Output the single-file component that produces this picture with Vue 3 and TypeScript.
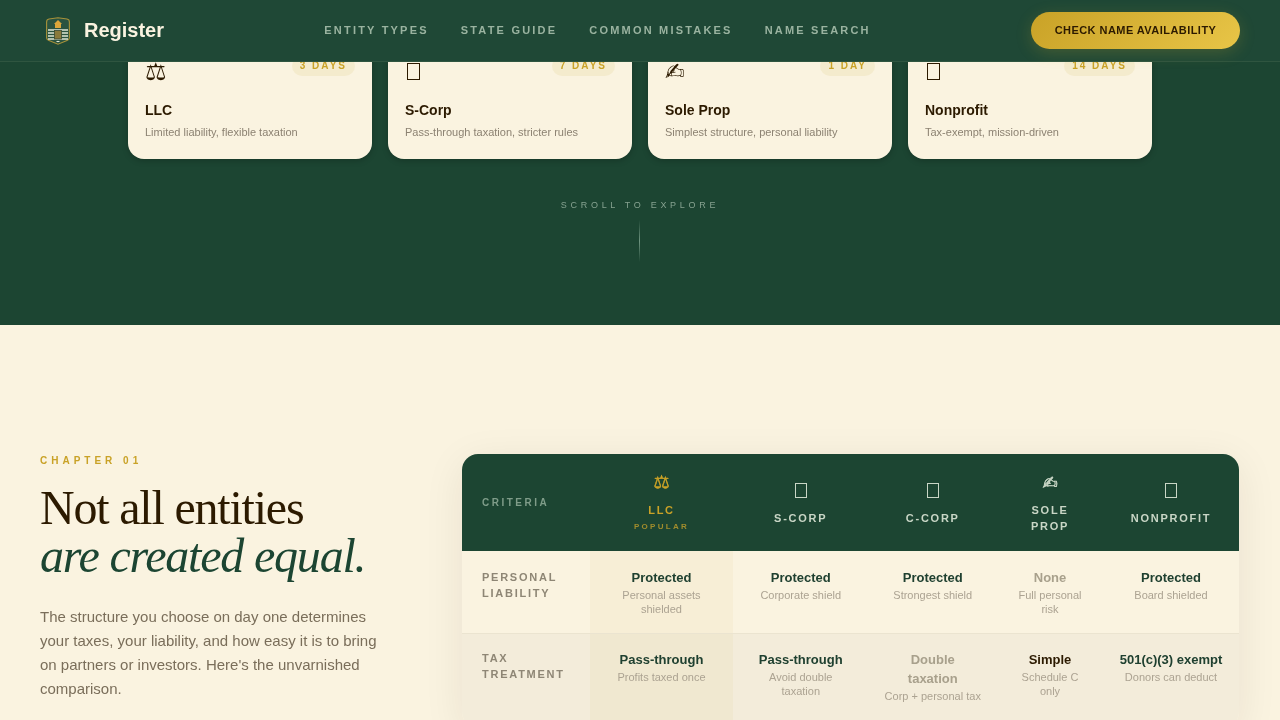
<script setup lang="ts">
interface Entity { icon: string; name: string; days: string; desc: string }
interface Column { icon: string; label: string; popular?: boolean }
interface Cell { value: string; note: string; tone?: string; highlight?: boolean }
interface Row { label: string; cells: Cell[] }

const links: string[] = ['Entity Types', 'State Guide', 'Common Mistakes', 'Name Search']

// An empty icon string draws the outlined placeholder box the design shows.
const entities: Entity[] = [
  { icon: '⚖', name: 'LLC', days: '3 days', desc: 'Limited liability, flexible taxation' },
  { icon: '', name: 'S-Corp', days: '7 days', desc: 'Pass-through taxation, stricter rules' },
  { icon: '✍\uFE0E', name: 'Sole Prop', days: '1 day', desc: 'Simplest structure, personal liability' },
  { icon: '', name: 'Nonprofit', days: '14 days', desc: 'Tax-exempt, mission-driven' }
]

const columns: Column[] = [
  { icon: '⚖', label: 'LLC', popular: true },
  { icon: '', label: 'S-Corp' },
  { icon: '', label: 'C-Corp' },
  { icon: '✍\uFE0E', label: 'Sole Prop' },
  { icon: '', label: 'Nonprofit' }
]

const rows: Row[] = [
  {
    label: 'Personal Liability',
    cells: [
      { value: 'Protected', note: 'Personal assets shielded', highlight: true },
      { value: 'Protected', note: 'Corporate shield' },
      { value: 'Protected', note: 'Strongest shield' },
      { value: 'None', note: 'Full personal risk', tone: 'weak' },
      { value: 'Protected', note: 'Board shielded' }
    ]
  },
  {
    label: 'Tax Treatment',
    cells: [
      { value: 'Pass-through', note: 'Profits taxed once', highlight: true },
      { value: 'Pass-through', note: 'Avoid double taxation' },
      { value: 'Double taxation', note: 'Corp + personal tax', tone: 'weak' },
      { value: 'Simple', note: 'Schedule C only', tone: 'neutral' },
      { value: '501(c)(3) exempt', note: 'Donors can deduct' }
    ]
  }
]
</script>

<template>
  <div class="page">
    <header class="nav">
      <a class="brand">
        <svg class="logo" width="24" height="28" viewBox="0 0 24 28" aria-hidden="true">
          <path d="M3 2 L12 .8 L21 2 Q23.4 2.4 23.4 5 V21 Q23.4 22.6 21 23.4 L12 27.2 L3 23.4 Q.6 22.6 .6 21 V5 Q.6 2.4 3 2 Z" fill="#2a5340" stroke="#a8923a" stroke-width="1.1" />
          <path d="M12 3 L16 7 H15 V11 H9 V7 H8 Z" fill="#dca63a" />
          <path d="M2 13 H22 M2 16 H22 M2 19 H22 M2 22 H22" stroke="#dfe6d3" stroke-width="1.3" />
          <rect x="8.5" y="13.5" width="7" height="8.5" fill="#8a7a3c" stroke="#3b4a32" stroke-width="0.8" />
          <path d="M10.5 24.5 H13.5" stroke="#dfe6d3" stroke-width="1.1" />
        </svg>
        <span class="brand-name">Register</span>
      </a>
      <nav class="links">
        <a v-for="link in links" :key="link" class="link">{{ link }}</a>
      </nav>
      <button class="cta" type="button">Check Name Availability</button>
    </header>

    <section class="hero">
      <div class="cards">
        <article v-for="e in entities" :key="e.name" class="card">
          <div class="card-top">
            <span v-if="e.icon" class="card-icon">{{ e.icon }}</span>
            <span v-else class="card-box"></span>
            <span class="badge">{{ e.days }}</span>
          </div>
          <h3 class="card-name">{{ e.name }}</h3>
          <p class="card-desc">{{ e.desc }}</p>
        </article>
      </div>
      <div class="scroll">
        <span class="scroll-text">Scroll to explore</span>
        <span class="scroll-line"></span>
      </div>
    </section>

    <section class="compare">
      <div class="intro">
        <p class="chapter">Chapter 01</p>
        <h2 class="title">Not all entities<br /><em>are created equal.</em></h2>
        <p class="lede">The structure you choose on day one determines your taxes, your liability, and how easy it is to bring on partners or investors. Here's the unvarnished comparison.</p>
      </div>

      <div class="table-wrap">
        <table class="table">
          <colgroup>
            <col class="c0" /><col class="c1" /><col class="c2" /><col class="c3" /><col class="c4" /><col class="c5" />
          </colgroup>
          <thead>
            <tr>
              <th class="crit">Criteria</th>
              <th v-for="c in columns" :key="c.label" class="col" :class="{ gold: c.popular }">
                <span v-if="c.icon" class="col-icon">{{ c.icon }}</span>
                <span v-else class="col-icon boxed"><span class="col-box"></span></span>
                <span class="col-label">{{ c.label }}</span>
                <span v-if="c.popular" class="popular">Popular</span>
              </th>
            </tr>
          </thead>
          <tbody>
            <tr v-for="r in rows" :key="r.label" class="row">
              <td class="label">{{ r.label }}</td>
              <td v-for="(cell, i) in r.cells" :key="i" class="cell" :class="{ hl: cell.highlight }">
                <div class="value" :class="cell.tone">{{ cell.value }}</div>
                <div class="note">{{ cell.note }}</div>
              </td>
            </tr>
          </tbody>
        </table>
      </div>
    </section>
  </div>
</template>

<style>
html, body { margin: 0; background: #faf3e0; overflow: hidden; }
</style>

<style scoped>
.page {
  font-family: "Liberation Sans", Arial, sans-serif;
  color: #2c1a00;
  height: 720px;
  overflow: hidden;
  position: relative;
  will-change: transform;
}

/* nav */
.nav {
  position: fixed;
  top: 0;
  left: 0;
  right: 0;
  z-index: 10;
  height: 61px;
  padding: 0 40px;
  display: flex;
  align-items: center;
  justify-content: space-between;
  background: #1f4836;
  border-bottom: 1px solid #2f5540;
}
.brand { display: flex; align-items: center; gap: 14px; margin-left: 6px; }
.logo { display: block; }
.brand-name { font-size: 20px; font-weight: 700; color: #faf3e0; }
.links { display: flex; gap: 32px; margin-bottom: 2px; }
.link {
  font-size: 11px;
  font-weight: 700;
  letter-spacing: 0.2em;
  text-transform: uppercase;
  color: #9ab3a0;
}
.cta {
  height: 37px;
  width: 209px;
  padding: 0 0 2px;
  border: 0;
  border-radius: 19px;
  background: linear-gradient(135deg, #c9a227, #e8c547);
  color: #2c1a00;
  font-family: inherit;
  font-size: 11px;
  font-weight: 700;
  letter-spacing: 0.45px;
  text-transform: uppercase;
  box-shadow: 0 4px 16px rgba(201, 162, 39, 0.22);
}

/* hero */
.hero {
  height: 325px;
  box-sizing: border-box;
  background: #1c4532;
  display: flex;
  flex-direction: column;
  align-items: center;
  justify-content: flex-end;
  padding-bottom: 63px;
}
.cards { display: flex; gap: 16px; }
.card {
  width: 244px;
  box-sizing: border-box;
  padding: 27px 17px 19px;
  background: #faf3e0;
  border-radius: 16px;
  box-shadow: 0 2px 6px rgba(0, 0, 0, 0.2);
}
.card-top { display: flex; justify-content: space-between; align-items: flex-start; height: 35px; }
.card-icon { font-size: 24px; line-height: 28px; color: #2c1a00; font-family: "Liberation Sans", "DejaVu Sans", sans-serif; }
.card-box { width: 13px; height: 17px; margin: 5px 0 0 2px; box-sizing: border-box; border: 1px solid #2c1a00; }
.badge {
  font-size: 10px;
  font-weight: 700;
  letter-spacing: 0.2em;
  text-transform: uppercase;
  color: #c9a227;
  background: rgba(201, 162, 39, 0.1);
  padding: 3px 8px;
  border-radius: 999px;
  line-height: 14px;
  margin-top: -2px;
}
.card-name { margin: 8px 0 5px; font-size: 14px; line-height: 18px; font-weight: 700; color: #2c1a00; }
.card-desc { margin: 0; font-size: 11px; line-height: 16px; color: #8c8272; }
.scroll { margin-top: 39px; display: flex; flex-direction: column; align-items: center; gap: 8px; }
.scroll-text {
  font-size: 9px;
  line-height: 14px;
  letter-spacing: 3.7px;
  text-transform: uppercase;
  color: #86a290;
}
.scroll-line {
  width: 1px;
  height: 42px;
  margin-right: 1px;
  background: linear-gradient(to bottom, transparent, #6f9480, transparent);
}

/* comparison */
.compare {
  background: #faf3e0;
  padding: 129px 40px 80px;
  display: flex;
  gap: 60px;
  align-items: flex-start;
}
.intro { width: 362px; flex: none; }
.chapter {
  margin: 1px 0 0;
  font-size: 10px;
  line-height: 12px;
  font-weight: 700;
  letter-spacing: 4px;
  text-transform: uppercase;
  color: #c9a227;
}
.title {
  margin: 16.5px 0 25px;
  font-family: "Liberation Serif", "Times New Roman", serif;
  font-weight: 400;
  font-size: 48px;
  line-height: 48px;
  letter-spacing: -1.2px;
  color: #2c1a00;
}
.title em { font-style: italic; color: #1c4532; }
.lede { margin: 0; max-width: 340px; font-size: 15px; line-height: 24px; color: #7a6e5a; }

.table-wrap {
  width: 777px;
  flex: none;
  border-radius: 16px;
  overflow: hidden;
  box-shadow: 0 8px 40px rgba(44, 26, 0, 0.08);
}
.table { width: 777px; table-layout: fixed; border-collapse: collapse; background: #faf3e0; }
.c0 { width: 128px; }
.c1 { width: 143px; }
.c2 { width: 135.5px; }
.c3 { width: 128.5px; }
.c4 { width: 106px; }
.c5 { width: 136px; }
thead tr { height: 97px; background: #1c4532; }
th { font-weight: 700; padding: 0 16px; }
.crit {
  text-align: left;
  padding-left: 20px;
  font-size: 10px;
  letter-spacing: 0.25em;
  text-transform: uppercase;
  color: #7f9c89;
}
.col { text-align: center; color: #c9d6c6; }
.col-icon { display: block; height: 22px; font-size: 18px; line-height: 22px; margin-bottom: 8px; font-family: "Liberation Sans", "DejaVu Sans", sans-serif; -webkit-text-stroke: 0.5px currentColor; }
.col-icon.boxed { margin-bottom: 5px; }
.col-box { display: block; width: 12px; height: 15px; margin: 4px auto 0; box-sizing: border-box; border: 1px solid currentColor; }
.col-label {
  display: block;
  font-size: 11px;
  line-height: 16px;
  letter-spacing: 1.75px;
  text-transform: uppercase;
}
.popular {
  display: block;
  padding-top: 1px;
  font-size: 8px;
  line-height: 16px;
  letter-spacing: 2.3px;
  text-transform: uppercase;
  color: #a08c2c;
}
.gold { color: #c9a227; padding-top: 1px; }
.gold .col-icon { margin-bottom: 9px; }
.row { border-bottom: 1px solid #ebe4d0; }
.row + .row { background: #f3ecda; }
.row + .row td { padding-bottom: 24px; }
.label {
  vertical-align: top;
  padding: 17.5px 10px 16px 20px;
  font-size: 11px;
  line-height: 16px;
  font-weight: 700;
  letter-spacing: 1.75px;
  text-transform: uppercase;
  color: #8e8675;
}
.row + .row .label { padding-top: 16px; }
.cell { vertical-align: top; text-align: center; padding: 17px 16px 16.5px; }
.row + .row .cell { padding-top: 16.5px; }
.hl { background: rgba(201, 162, 39, 0.05); }
.value { font-size: 13px; line-height: 19px; font-weight: 700; color: #1f4030; }
.value.weak { color: #a8a08c; }
.value.neutral { color: #2c1a00; }
.note { margin-top: 1px; font-size: 11px; line-height: 14px; color: #aca392; }
</style>
